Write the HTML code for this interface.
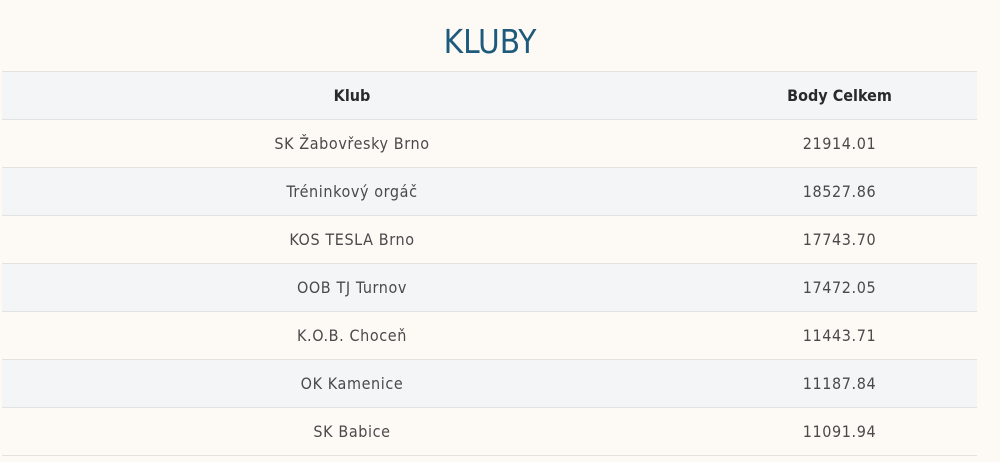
<!DOCTYPE html>
<html><head><meta charset="utf-8"><style>
body{margin:0;background:#fdfaf6;font-family:"DejaVu Sans Condensed","Liberation Sans",sans-serif;width:1000px;height:462px;overflow:hidden}
h1{margin:0;position:absolute;top:22px;left:0;width:980px;text-align:center;font-weight:normal;font-size:33px;color:#1e5a7b;font-family:"DejaVu Sans Condensed","Liberation Sans",sans-serif}
table{position:absolute;top:71px;left:2px;width:975px;border-collapse:collapse;border-bottom:1px solid #e2e2e0}
td,th{height:47px;border-top:1px solid #e2e2e0;text-align:center;font-size:16px;color:#4a4a4a;padding:0}
td{letter-spacing:0.6px}
th{color:#2a2a2a;font-weight:bold;font-size:16px;background:#f4f5f7}
tr:nth-child(even) td{background:#f4f5f7}
tr:nth-child(odd) td{background:#fdfaf6}
td:first-child,th:first-child{width:700px}
</style></head><body>
<h1>KLUBY</h1>
<table>
<thead><tr><th>Klub</th><th>Body Celkem</th></tr></thead>
<tbody>
<tr><td>SK Žabovřesky Brno</td><td>21914.01</td></tr>
<tr><td>Tréninkový orgáč</td><td>18527.86</td></tr>
<tr><td>KOS TESLA Brno</td><td>17743.70</td></tr>
<tr><td>OOB TJ Turnov</td><td>17472.05</td></tr>
<tr><td>K.O.B. Choceň</td><td>11443.71</td></tr>
<tr><td>OK Kamenice</td><td>11187.84</td></tr>
<tr><td>SK Babice</td><td>11091.94</td></tr>
</tbody></table>
</body></html>
